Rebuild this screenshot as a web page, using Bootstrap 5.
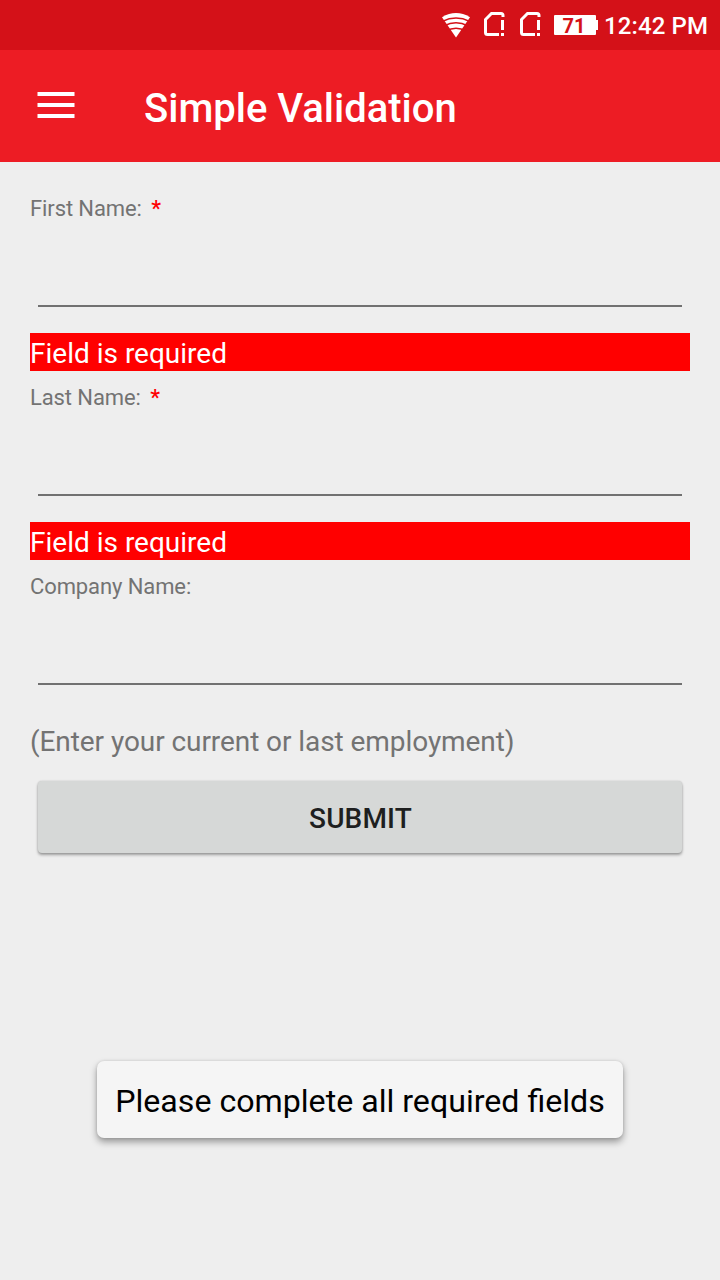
<!DOCTYPE html>
<html lang="en">
<head>
<meta charset="utf-8">
<meta name="viewport" content="width=device-width, initial-scale=1">
<title>Simple Validation</title>
<link href="https://cdn.jsdelivr.net/npm/bootstrap@5.3.0/dist/css/bootstrap.min.css" rel="stylesheet">
<style>
body{background:#eee;font-family:Roboto,"Liberation Sans",sans-serif;height:1280px;overflow:hidden}
.status-bar{background:#d41118;height:50px;padding-right:12px;font-size:24px;font-weight:500;line-height:50px}
.battery{width:44px;height:20px;margin:0 6px 0 13px}
.level{width:42px;height:20px;background:#fff;color:#d41118;font-size:20px;font-weight:700;line-height:22px;border-radius:1px;padding-right:2px}
.tip{width:2px;height:10px;background:#fff}
.clock{letter-spacing:.1px;padding-top:2px}
.app-bar{background:#ed1c24;height:112px;padding:0 37px}
.menu-btn{width:38px;height:26px;margin-top:-2px}
.app-title{font-size:40px;font-weight:500;margin-left:69px;line-height:48px;padding-top:6px}
.form-area{padding:20px 30px 0}
.field-label{font-size:22px;line-height:30px;color:#737373;padding-top:12px;letter-spacing:-.1px}
.star{color:#f00;margin-left:4px;font-weight:500}
.line-input{height:83px;width:auto;margin:0 8px;border-bottom:2px solid #717171!important;font-size:32px;align-self:stretch}
.field-error{background:#f00;font-size:28px;line-height:35px;padding-top:3px;margin-top:26px}
.hint{font-size:28px;line-height:36px;color:#737373;margin-top:39px;letter-spacing:-.07px}
.submit-btn{height:72px;margin:21px 8px 0;background:#d6d8d7;color:#1e1f1f;border-radius:4px;font-size:28px;font-weight:500;letter-spacing:.15px;line-height:72px;padding:3px 0 0 1px;box-shadow:0 2px 3px rgba(0,0,0,.34),0 0 2px rgba(0,0,0,.16)}
.toast-msg{left:97px;top:1061px;width:526px;height:77px;background:#f5f5f5;color:#000;border-radius:7px;font-size:32.15px;line-height:80px;box-shadow:0 4px 7px rgba(0,0,0,.36),0 0 3px rgba(0,0,0,.12)}
</style>
</head>
<body>
<header>
<div class="status-bar d-flex align-items-center justify-content-end text-white">
<svg width="28" height="25" viewBox="0 0 28 25" fill="none" stroke="#d41118" stroke-width="1.5"><path d="M0 4.200Q14-4 28 4.200L14 24.500Z" fill="#fff" stroke="none"/><path d="M0 8.500Q14 1.500 28 8.500M2 13Q14 6.500 26 13M4 17.800Q14 12.500 24 17.800"/></svg>
<svg width="21" height="24" viewBox="0 0 21 24" style="margin-left:14px;margin-bottom:2px"><path d="M15 22.500H3.500Q1.500 22.500 1.500 20.500V7.500L7.500 1.500H17Q19 1.500 19 3.500V5" fill="none" stroke="#fff" stroke-width="3"/><path d="M17 8h3v10h-3zM17 21h3v3h-3z" fill="#fff"/></svg>
<svg width="21" height="24" viewBox="0 0 21 24" style="margin-left:15px;margin-bottom:2px"><path d="M15 22.500H3.500Q1.500 22.500 1.500 20.500V7.500L7.500 1.500H17Q19 1.500 19 3.500V5" fill="none" stroke="#fff" stroke-width="3"/><path d="M17 8h3v10h-3zM17 21h3v3h-3z" fill="#fff"/></svg>
<div class="battery d-flex align-items-center"><span class="level text-center">71</span><span class="tip"></span></div>
<span class="clock">12:42 PM</span>
</div>
<nav class="app-bar d-flex align-items-center text-white">
<button class="menu-btn btn p-0 border-0 d-flex" type="button" aria-label="Menu"><svg width="38" height="26" viewBox="0 0 38 26"><path d="M.5 0h37v4H.5zM.5 11h37v4H.5zM.5 22h37v4H.5z" fill="#fff"/></svg></button>
<h1 class="app-title mb-0">Simple Validation</h1>
</nav>
</header>
<main>
<form class="form-area d-flex flex-column" novalidate>
<label class="field-label" for="first">First Name: <span class="star">*</span></label>
<input id="first" class="line-input form-control bg-transparent border-0 rounded-0" type="text">
<div class="field-error text-white">Field is required</div>
<label class="field-label" for="last">Last Name: <span class="star">*</span></label>
<input id="last" class="line-input form-control bg-transparent border-0 rounded-0" type="text">
<div class="field-error text-white">Field is required</div>
<label class="field-label" for="company">Company Name:</label>
<input id="company" class="line-input form-control bg-transparent border-0 rounded-0" type="text">
<div class="hint">(Enter your current or last employment)</div>
<button class="submit-btn btn border-0 d-flex align-items-center justify-content-center" type="button">SUBMIT</button>
</form>
</main>
<div class="toast-msg position-absolute text-center" role="status">Please complete all required fields</div>
<script src="https://cdn.jsdelivr.net/npm/bootstrap@5.3.0/dist/js/bootstrap.bundle.min.js"></script>
</body>
</html>
